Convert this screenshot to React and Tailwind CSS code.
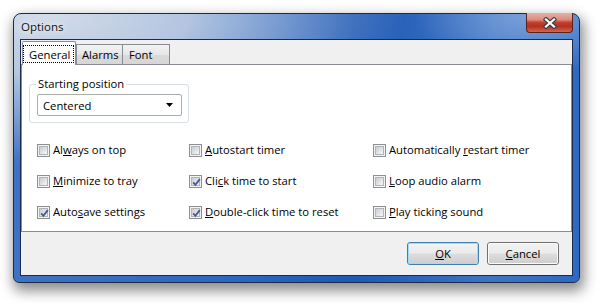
import React from "react";

function CheckBox({ checked }) {
  return (
    <span className="relative w-[13px] h-[13px] shrink-0 border border-[#8e8f8f] bg-[#f4f4f4] p-[1px] flex">
      <span className="flex-1 border border-[#b0b4b9] bg-[linear-gradient(135deg,#c8ccd1_0%,#e4e6e8_60%,#f5f5f5_100%)]" />
      {checked && (
        <svg className="absolute left-0 top-0" width="13" height="13" viewBox="0 0 13 13">
          <path d="M3.2 6.4 L5.4 8.8 L9.8 3.2" fill="none" stroke="#4a5c94" strokeWidth="1.9" strokeLinecap="butt" strokeLinejoin="miter" />
        </svg>
      )}
    </span>
  );
}

function Item({ checked, children }) {
  return (
    <div className="flex items-center h-[31px] gap-[3px]">
      <CheckBox checked={checked} />
      <span className="whitespace-nowrap">{children}</span>
    </div>
  );
}

function Btn({ def, children }) {
  return (
    <div
      className={
        def
          ? "w-[72px] h-[23px] rounded-[3px] border border-[#3c7fb1] flex"
          : "w-[72px] h-[23px] rounded-[3px] border border-[#707070] flex"
      }
    >
      <div
        className={
          def
            ? "flex-1 rounded-[2px] border border-[#9fdcf6] bg-[linear-gradient(#f2f2f2_0%,#ebebeb_48%,#dddddd_52%,#cfcfcf_100%)] flex items-center justify-center leading-[15px]"
            : "flex-1 rounded-[2px] border border-[#fbfbfb] bg-[linear-gradient(#f2f2f2_0%,#ebebeb_48%,#dddddd_52%,#cfcfcf_100%)] flex items-center justify-center leading-[15px]"
        }
      >
        {children}
      </div>
    </div>
  );
}

export default function App() {
  return (
    <div className="w-[597px] h-[303px] bg-white pt-[13px] pl-[13px] font-['Open_Sans',sans-serif] text-[11.25px] text-black overflow-hidden">
      <div className="w-[567px] h-[270px] rounded-t-[8px] rounded-b-[6px] border border-[#1c2a44] flex flex-col shadow-[2px_6px_13px_2px_rgba(0,0,0,0.45)] [background:radial-gradient(ellipse_360px_150px_at_30px_0px,rgba(212,221,233,1)_0%,rgba(190,205,227,0.92)_40%,rgba(170,192,224,0)_100%),radial-gradient(ellipse_120px_60px_at_520px_0px,rgba(170,198,236,0.6)_0%,rgba(170,198,236,0)_100%),linear-gradient(90deg,#3f72c2_0%,#2d66c0_40%,#1f59b5_60%,#3f74c4_85%,#2f68c2_100%)]">
        {/* Title bar */}
        <div className="h-[25px] flex items-start justify-between shrink-0">
          <div className="pl-[7px] h-[25px] flex items-center text-[#111] text-[11.5px] [text-shadow:0_0_8px_rgba(255,255,255,0.9),0_0_4px_rgba(255,255,255,0.7)]">
            Options
          </div>
          <div className="-mt-px mr-[6px] w-[47px] h-[20px] rounded-b-[4px] border border-[#5b2219] border-t-0 flex items-center justify-center bg-[linear-gradient(#e7b2a7_0%,#d98d7e_35%,#c2402f_50%,#b5301f_70%,#d2664f_100%)]">
            <svg width="14" height="12" viewBox="0 0 14 12">
              <path d="M3 2.5 L11 9.5 M11 2.5 L3 9.5" stroke="#3b3f46" strokeWidth="4.4" strokeLinecap="square" />
              <path d="M3 2.5 L11 9.5 M11 2.5 L3 9.5" stroke="#ffffff" strokeWidth="2.2" strokeLinecap="square" />
            </svg>
          </div>
        </div>

        {/* Client area */}
        <div className="mx-[6px] mb-[6px] flex-1 border border-[#1a2c4c] bg-[#f0f0f0] flex flex-col">
          {/* Tabs */}
          <div className="h-[24px] flex items-end pl-[1px] shrink-0">
            <div className="relative z-10 -mb-px w-[54px] h-[24px] mt-[1px] border-x border-t border-[#898c95] rounded-t-[2px] bg-white">
              <div className="mt-[3px] mr-[1px] h-[18px] border border-dotted border-black pl-[5px] flex items-center leading-[15px]">
                General
              </div>
            </div>
            <div className="w-[47px] h-[20px] border-x border-t border-[#898c95] bg-[linear-gradient(#f3f3f3,#e6e6e6_50%,#dadada_51%,#d6d6d6)] pl-[5px] flex items-center leading-[15px]">
              Alarms
            </div>
            <div className="w-[47px] h-[20px] border-r border-t border-[#898c95] bg-[linear-gradient(#f3f3f3,#e6e6e6_50%,#dadada_51%,#d6d6d6)] pl-[6px] flex items-center leading-[15px]">
              Font
            </div>
          </div>

          {/* Tab panel */}
          <div className="flex-1 border border-[#898c95] bg-white pl-[7px] pt-[11px]">
            <fieldset className="w-[160px] border border-[#d5dfe5] rounded-[3px]">
              <legend className="ml-[6px] px-[2px] leading-[16px]">Starting position</legend>
              <div className="ml-[7px] mt-[2px] mb-[6px] w-[145px] h-[22px] border border-[#acacac] rounded-[2px] bg-white flex items-center justify-between pl-[5px] pr-[8px]">
                <span className="leading-[15px]">Centered</span>
                <svg width="7" height="4" viewBox="0 0 7 4">
                  <path d="M0 0 H7 L3.5 4 Z" fill="#000" />
                </svg>
              </div>
            </fieldset>

            <div className="ml-[8px] mt-[12px] grid grid-cols-[152px_184px_1fr]">
              <Item>Al<u>w</u>ays on top</Item>
              <Item><u>A</u>utostart timer</Item>
              <Item>Automatically <u>r</u>estart timer</Item>
              <Item><u>M</u>inimize to tray</Item>
              <Item checked>Cli<u>c</u>k time to start</Item>
              <Item><u>L</u>oop audio alarm</Item>
              <Item checked>Auto<u>s</u>ave settings</Item>
              <Item checked><u>D</u>ouble-click time to reset</Item>
              <Item><u>P</u>lay ticking sound</Item>
            </div>
          </div>

          {/* Buttons */}
          <div className="h-[43px] shrink-0 flex justify-end items-start gap-[8px] pt-[10px] pr-[13px]">
            <Btn def><span><u>O</u>K</span></Btn>
            <Btn><span><u>C</u>ancel</span></Btn>
          </div>
        </div>
      </div>
    </div>
  );
}
